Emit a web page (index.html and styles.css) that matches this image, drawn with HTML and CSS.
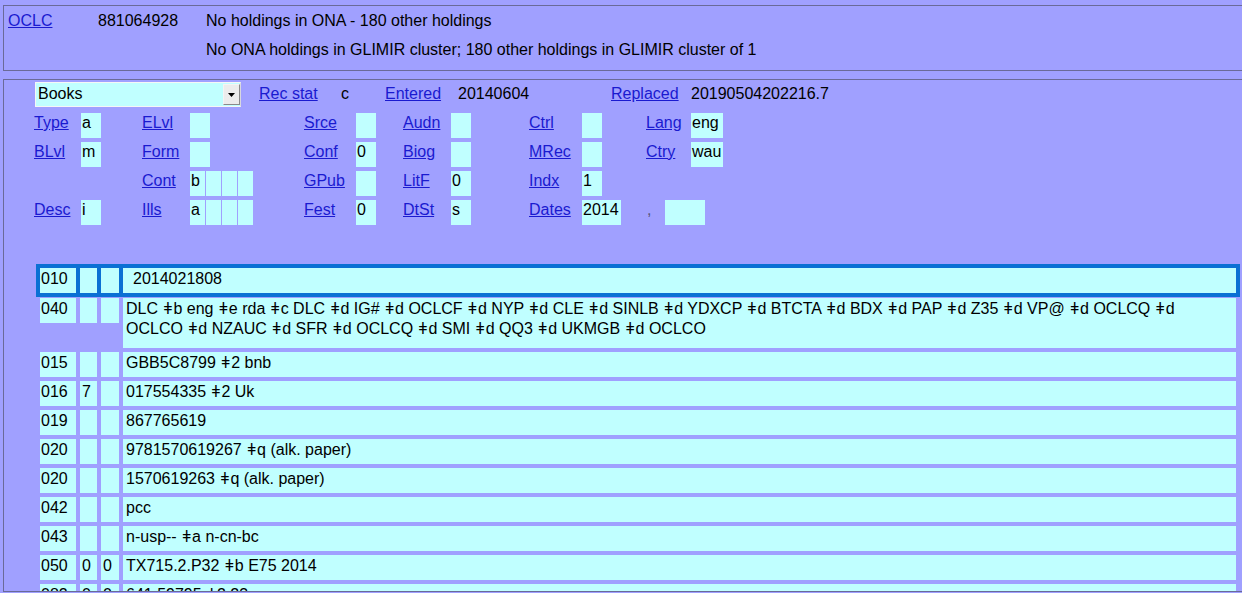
FILE: index.html
```html
<!DOCTYPE html>
<html>
<head>
<meta charset="utf-8">
<link rel="stylesheet" href="styles.css">
</head>
<body>
<div class="panel top">
  <div class="hrow"><a class="lnk" href="#">OCLC</a><span>881064928</span><span>No holdings in ONA - 180 other holdings</span></div>
  <div class="hrow"><span></span><span></span><span>No ONA holdings in GLIMIR cluster; 180 other holdings in GLIMIR cluster of 1</span></div>
</div>
<div class="panel main">
  <div class="row1">
    <div class="c"><div class="select"><span class="sel-text">Books</span><span class="sel-btn"><svg width="7" height="4" viewBox="0 0 7 4"><path d="M0 0h7L3.5 4z" fill="#000"/></svg></span></div></div>
    <a class="c lnk" href="#">Rec stat</a><span class="c">c</span>
    <a class="c lnk" href="#">Entered</a><span class="c">20140604</span>
    <a class="c lnk" href="#">Replaced</a><span class="c">20190504202216.7</span>
  </div>
  <div class="frow">
    <a class="c lnk" href="#">Type</a><span class="c b">a</span>
    <a class="c lnk" href="#">ELvl</a><span class="c b"></span>
    <a class="c lnk" href="#">Srce</a><span class="c b"></span>
    <a class="c lnk" href="#">Audn</a><span class="c b"></span>
    <a class="c lnk" href="#">Ctrl</a><span class="c b"></span>
    <a class="c lnk" href="#">Lang</a><span class="c b w3">eng</span>
  </div>
  <div class="frow">
    <a class="c lnk" href="#">BLvl</a><span class="c b">m</span>
    <a class="c lnk" href="#">Form</a><span class="c b"></span>
    <a class="c lnk" href="#">Conf</a><span class="c b">0</span>
    <a class="c lnk" href="#">Biog</a><span class="c b"></span>
    <a class="c lnk" href="#">MRec</a><span class="c b"></span>
    <a class="c lnk" href="#">Ctry</a><span class="c b w3">wau</span>
  </div>
  <div class="frow">
    <span></span><span></span>
    <a class="c lnk" href="#">Cont</a><span class="c multi"><span class="b s">b</span><span class="b s"></span><span class="b s"></span><span class="b s"></span></span>
    <a class="c lnk" href="#">GPub</a><span class="c b"></span>
    <a class="c lnk" href="#">LitF</a><span class="c b">0</span>
    <a class="c lnk" href="#">Indx</a><span class="c b">1</span>
  </div>
  <div class="frow">
    <a class="c lnk" href="#">Desc</a><span class="c b">i</span>
    <a class="c lnk" href="#">Ills</a><span class="c multi"><span class="b s">a</span><span class="b s"></span><span class="b s"></span><span class="b s"></span></span>
    <a class="c lnk" href="#">Fest</a><span class="c b">0</span>
    <a class="c lnk" href="#">DtSt</a><span class="c b">s</span>
    <a class="c lnk" href="#">Dates</a>
    <span class="c dates"><span class="b w4">2014</span><span class="comma">,</span><span class="b w4b"></span></span>
  </div>

  <div class="fields">
    <div class="fr sel"><div class="fc tag">010</div><div class="fc ind"></div><div class="fc ind"></div><div class="fc data first">2014021808</div></div>
    <div class="fr"><div class="fc tag">040</div><div class="fc ind"></div><div class="fc ind"></div><div class="fc data two">DLC <span class="d">ǂ</span>b eng <span class="d">ǂ</span>e rda <span class="d">ǂ</span>c DLC <span class="d">ǂ</span>d IG# <span class="d">ǂ</span>d OCLCF <span class="d">ǂ</span>d NYP <span class="d">ǂ</span>d CLE <span class="d">ǂ</span>d SINLB <span class="d">ǂ</span>d YDXCP <span class="d">ǂ</span>d BTCTA <span class="d">ǂ</span>d BDX <span class="d">ǂ</span>d PAP <span class="d">ǂ</span>d Z35 <span class="d">ǂ</span>d VP@ <span class="d">ǂ</span>d OCLCQ <span class="d">ǂ</span>d<br>OCLCO <span class="d">ǂ</span>d NZAUC <span class="d">ǂ</span>d SFR <span class="d">ǂ</span>d OCLCQ <span class="d">ǂ</span>d SMI <span class="d">ǂ</span>d QQ3 <span class="d">ǂ</span>d UKMGB <span class="d">ǂ</span>d OCLCO</div></div>
    <div class="fr"><div class="fc tag">015</div><div class="fc ind"></div><div class="fc ind"></div><div class="fc data">GBB5C8799 <span class="d">ǂ</span>2 bnb</div></div>
    <div class="fr"><div class="fc tag">016</div><div class="fc ind">7</div><div class="fc ind"></div><div class="fc data">017554335 <span class="d">ǂ</span>2 Uk</div></div>
    <div class="fr"><div class="fc tag">019</div><div class="fc ind"></div><div class="fc ind"></div><div class="fc data">867765619</div></div>
    <div class="fr"><div class="fc tag">020</div><div class="fc ind"></div><div class="fc ind"></div><div class="fc data">9781570619267 <span class="d">ǂ</span>q (alk. paper)</div></div>
    <div class="fr"><div class="fc tag">020</div><div class="fc ind"></div><div class="fc ind"></div><div class="fc data">1570619263 <span class="d">ǂ</span>q (alk. paper)</div></div>
    <div class="fr"><div class="fc tag">042</div><div class="fc ind"></div><div class="fc ind"></div><div class="fc data">pcc</div></div>
    <div class="fr"><div class="fc tag">043</div><div class="fc ind"></div><div class="fc ind"></div><div class="fc data">n-usp-- <span class="d">ǂ</span>a n-cn-bc</div></div>
    <div class="fr"><div class="fc tag">050</div><div class="fc ind">0</div><div class="fc ind">0</div><div class="fc data">TX715.2.P32 <span class="d">ǂ</span>b E75 2014</div></div>
    <div class="fr"><div class="fc tag">082</div><div class="fc ind">0</div><div class="fc ind">0</div><div class="fc data">641.59795 <span class="d">ǂ</span>2 23</div></div>
  </div>
</div>
</body>
</html>
```
FILE: styles.css
```css
html, body {
  margin: 0;
  height: 100%;
}
body {
  padding: 5px 0 0 3px;
  background: #a0a0ff;
  font-family: "Liberation Sans", Arial, sans-serif;
  font-size: 16px;
  color: #000;
  overflow: hidden;
  box-sizing: border-box;
}
.lnk {
  color: #1a1ad0;
  text-decoration: underline;
}
.panel {
  border: 1px solid #6a6a98;
  width: 1260px;
  box-sizing: border-box;
}
.top {
  height: 66px;
}
.hrow {
  display: grid;
  grid-template-columns: 90px 108px 1fr;
  height: 29px;
  line-height: 29px;
  padding-left: 4px;
  white-space: nowrap;
}
.main {
  margin-top: 8px;
  height: 513px;
  overflow: hidden;
  padding: 2px 0 0 30px;
}
.row1 {
  display: grid;
  grid-template-columns: 225px 82px 44px 73px 153px 80px 1fr;
  height: 29px;
  align-items: start;
  white-space: nowrap;
}
.frow {
  display: grid;
  grid-template-columns: 47px 61px 48px 114px 52px 47px 48px 78px 53px 64px 45px 1fr;
  height: 29px;
  align-items: start;
  white-space: nowrap;
}
.c {
  display: block;
  height: 25px;
  margin-top: 2px;
  padding-top: 1px;
  line-height: 18px;
  box-sizing: border-box;
}
.b {
  display: block;
  background: #c0ffff;
  width: 20px;
  height: 25px;
  padding-left: 1px;
  box-sizing: border-box;
}
.w3 { width: 32px; }
.w4 { width: 39px; }
.w4b { width: 40px; margin-left: 14px; }
.multi {
  display: flex;
  gap: 1px;
  padding-top: 0;
}
.multi .s {
  width: 15px;
  padding-top: 1px;
}
.dates {
  grid-column: span 3;
  display: flex;
  padding-top: 0;
}
.dates .b { padding-top: 1px; }
.comma {
  margin-left: 26px;
  padding-top: 1px;
  color: #55557a;
}
.select {
  margin-left: 1px;
  margin-top: -3px;
  width: 206px;
  height: 25px;
  box-sizing: border-box;
  border: 1px solid #f6f6f6;
  border-right-color: #d8d8e0;
  background: #c0ffff;
  display: flex;
  align-items: stretch;
}
.sel-text {
  flex: 1;
  padding: 2px 0 0 2px;
  line-height: 18px;
}
.sel-btn {
  width: 17px;
  margin: 1px 0 1px 0;
  background: #ececec;
  border: 1px solid #8a8a8a;
  border-top-color: #f4f4f4;
  border-left-color: #f4f4f4;
  box-sizing: border-box;
  display: flex;
  align-items: center;
  justify-content: center;
}
.fields {
  margin-top: 37px;
  margin-left: 2px;
  width: 1204px;
}
.fr {
  display: grid;
  grid-template-columns: 36px 17px 18px 1fr;
  column-gap: 4px;
  padding: 2px 4px;
  align-items: start;
}
.fr.sel {
  background: #0a70d4;
  padding: 4px;
  margin-bottom: -1px;
}
.fc {
  background: #c0ffff;
  min-height: 25px;
  padding: 1px 0 0 1px;
  line-height: 20px;
  box-sizing: border-box;
  white-space: nowrap;
}
.fc.ind { padding-left: 2px; }
.fc.data { padding-left: 3px; }
.fc.data.first { padding-left: 10px; }
.fc.data.two { height: 50px; }
.d {
  padding: 0 0.8px;
}
```
